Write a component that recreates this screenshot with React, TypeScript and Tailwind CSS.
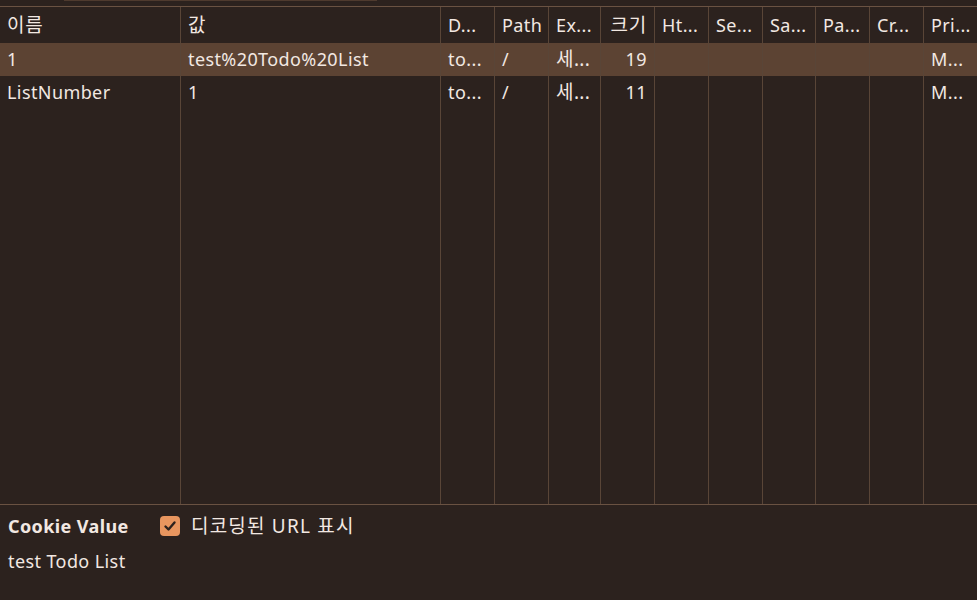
import React from "react";

const cols = [
  { key: "name", label: "이름", w: 181 },
  { key: "value", label: "값", w: 260 },
  { key: "domain", label: "D...", w: 54 },
  { key: "path", label: "Path", w: 54 },
  { key: "expires", label: "Ex...", w: 52 },
  { key: "size", label: "크기", w: 54, right: true },
  { key: "http", label: "Ht...", w: 54 },
  { key: "secure", label: "Se...", w: 54 },
  { key: "same", label: "Sa...", w: 53 },
  { key: "part", label: "Pa...", w: 54 },
  { key: "cross", label: "Cr...", w: 54 },
  { key: "prio", label: "Pri...", w: 53 },
];

const rows: Record<string, string>[] = [
  { name: "1", value: "test%20Todo%20List", domain: "to...", path: "/", expires: "세...", size: "19", prio: "M..." },
  { name: "ListNumber", value: "1", domain: "to...", path: "/", expires: "세...", size: "11", prio: "M..." },
];

const hasKo = (s: string) => /[\uac00-\ud7a3]/.test(s);

export default function App() {
  return (
    <div
      className="w-[977px] h-[600px] bg-[#2c221e] text-[#f2e8e2] flex flex-col overflow-hidden text-[18px] tracking-[0.4px]"
      style={{ fontFamily: '"Noto Sans", "Noto Sans CJK KR", sans-serif' }}
    >
      {/* filter strip */}
      <div className="h-[6px] shrink-0 relative">
        <div className="absolute left-[64px] top-0 w-[313px] h-[1px] bg-[#4e3a2e]" />
      </div>
      <div className="h-[1px] shrink-0 bg-[#6a5242]" />

      {/* table */}
      <div className="flex flex-1 min-h-0">
        {cols.map((c, i) => (
          <div
            key={c.key}
            className={`flex flex-col shrink-0 ${i < cols.length - 1 ? "border-r border-[#594537]" : ""}`}
            style={{ width: c.w }}
          >
            <div
              className={`h-[36px] flex items-center px-[7px] pt-[1px] whitespace-nowrap overflow-hidden ${
                c.right ? "justify-end" : ""
              } ${hasKo(c.label) ? "text-[19px] tracking-[0.8px]" : ""}`}
            >
              {c.label}
            </div>
            {rows.map((r, ri) => (
              <div
                key={ri}
                className={`h-[33px] flex items-center px-[7px] whitespace-nowrap overflow-hidden ${
                  ri === 0 ? "bg-[#5c4333]" : ""
                } ${c.right ? "justify-end" : ""} ${hasKo(r[c.key] ?? "") ? "text-[19px]" : ""}`}
              >
                {r[c.key] ?? ""}
              </div>
            ))}
          </div>
        ))}
      </div>

      {/* cookie value panel */}
      <div className="h-[1px] shrink-0 bg-[#6a5242]" />
      <div className="h-[95px] shrink-0 px-[8px] pt-[8px]">
        <div className="flex items-center h-[26px]">
          <span className="font-bold w-[152px]">Cookie Value</span>
          <span className="w-[20px] h-[20px] rounded-[4px] bg-[#e8965f] flex items-center justify-center">
            <svg width="14" height="14" viewBox="0 0 14 14">
              <path d="M2.5 7.5 L5.5 10.5 L11.5 3.5" fill="none" stroke="#2c221e" strokeWidth="2.4" strokeLinecap="round" strokeLinejoin="round" />
            </svg>
          </span>
          <span className="ml-[11px] text-[19px] tracking-[1.2px]">디코딩된 URL 표시</span>
        </div>
        <div className="mt-[9px]">test Todo List</div>
      </div>
    </div>
  );
}
